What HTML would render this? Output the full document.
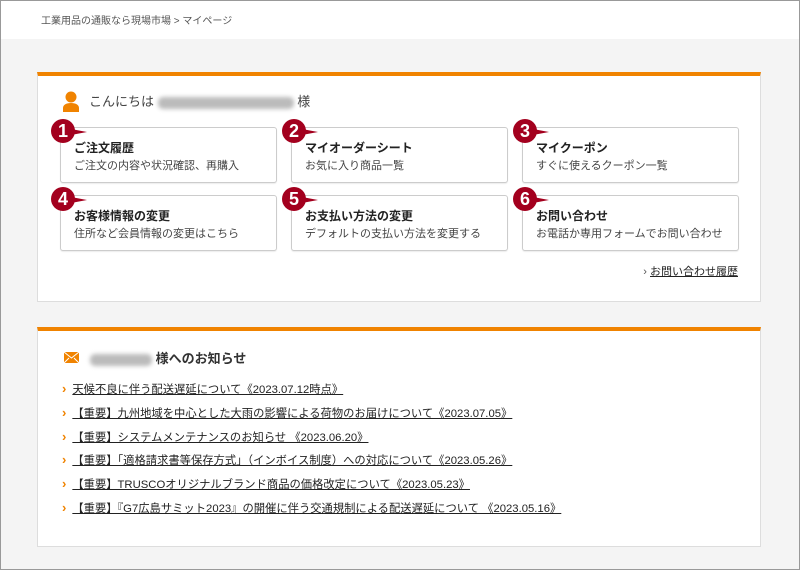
<!DOCTYPE html>
<html><head><meta charset="utf-8"><style>
*{margin:0;padding:0;box-sizing:border-box}
body{width:800px;height:570px;background:#f4f4f4;font-family:"Liberation Sans","Noto Sans CJK JP",sans-serif;color:#333;position:relative;overflow:hidden;border:1px solid #999}
.top{position:absolute;left:0;top:0;width:798px;height:38px;background:#fff}
.bc{position:absolute;left:40px;top:11px;font-size:10px;color:#555}
.card{position:absolute;left:36px;width:724px;background:#fff;border:1px solid #ddd;border-top:4px solid #f08300}
.btn{position:absolute;width:217px;height:56px;border:1px solid #ccc;border-radius:3px;background:#fff;box-shadow:0 1px 1px rgba(0,0,0,.08)}
.btn b{position:absolute;left:13px;top:11px;font-size:12px;color:#222}
.btn span{position:absolute;left:13px;top:29px;font-size:11px;color:#444}
.bd{position:absolute;width:24px;height:24px;border-radius:50%;background:#a3001e;color:#fff;font-weight:bold;font-size:18px;text-align:center;line-height:24px}
.bd:after{content:"";position:absolute;left:20px;top:10px;border-left:16px solid #a3001e;border-top:3px solid transparent;border-bottom:3px solid transparent}
.blur{display:inline-block;height:12px;background:#bbb;border-radius:5px;filter:blur(2px);vertical-align:middle}
ul{list-style:none;position:absolute;left:24px;top:50px}
li{font-size:11.3px;height:23.8px;color:#222}
li:before{content:"›";color:#f08300;font-weight:bold;margin-right:6px;font-size:13px}
li a{color:#222;text-decoration:underline}
</style></head><body>
<div class="top"></div>
<div class="bc">工業用品の通販なら現場市場 &gt; マイページ</div>
<div class="card" style="top:71px;height:230px">
 <svg style="position:absolute;left:24px;top:15px" width="18" height="22" viewBox="0 0 18 22"><circle cx="9" cy="6" r="5.5" fill="#f08300"/><path d="M1 21v-4c0-3 3-5 8-5s8 2 8 5v4z" fill="#f08300"/></svg>
 <div style="position:absolute;left:51px;top:15px;font-size:13px;color:#444">こんにちは <span class="blur" style="width:136px"></span> 様</div>
 <div class="btn" style="left:22px;top:51px"><b>ご注文履歴</b><span>ご注文の内容や状況確認、再購入</span></div>
 <div class="btn" style="left:253px;top:51px"><b>マイオーダーシート</b><span>お気に入り商品一覧</span></div>
 <div class="btn" style="left:484px;top:51px"><b>マイクーポン</b><span>すぐに使えるクーポン一覧</span></div>
 <div class="btn" style="left:22px;top:119px"><b>お客様情報の変更</b><span>住所など会員情報の変更はこちら</span></div>
 <div class="btn" style="left:253px;top:119px"><b>お支払い方法の変更</b><span>デフォルトの支払い方法を変更する</span></div>
 <div class="btn" style="left:484px;top:119px"><b>お問い合わせ</b><span>お電話か専用フォームでお問い合わせ</span></div>
 <div class="bd" style="left:13px;top:43px">1</div>
 <div class="bd" style="left:244px;top:43px">2</div>
 <div class="bd" style="left:475px;top:43px">3</div>
 <div class="bd" style="left:13px;top:111px">4</div>
 <div class="bd" style="left:244px;top:111px">5</div>
 <div class="bd" style="left:475px;top:111px">6</div>
 <div style="position:absolute;right:22px;top:187px;font-size:11px"><span style="color:#555">›</span> <a style="color:#222;text-decoration:underline">お問い合わせ履歴</a></div>
</div>
<div class="card" style="top:326px;height:220px">
 <svg style="position:absolute;left:26px;top:21px" width="15" height="11" viewBox="0 0 15 11"><rect width="15" height="11" fill="#f08300"/><path d="M0 0l7.5 6L15 0M0 11l5-5M15 11l-5-5" stroke="#fff" fill="none"/></svg>
 <div style="position:absolute;left:52px;top:17px;font-size:13px;font-weight:bold;color:#333"><span class="blur" style="width:62px"></span> 様へのお知らせ</div>
 <ul>
  <li><a>天候不良に伴う配送遅延について《2023.07.12時点》</a></li>
  <li><a>【重要】九州地域を中心とした大雨の影響による荷物のお届けについて《2023.07.05》</a></li>
  <li><a>【重要】システムメンテナンスのお知らせ 《2023.06.20》</a></li>
  <li><a>【重要】「適格請求書等保存方式」（インボイス制度）への対応について《2023.05.26》</a></li>
  <li><a>【重要】TRUSCOオリジナルブランド商品の価格改定について《2023.05.23》</a></li>
  <li><a>【重要】『G7広島サミット2023』の開催に伴う交通規制による配送遅延について 《2023.05.16》</a></li>
 </ul>
</div>
</body></html>
